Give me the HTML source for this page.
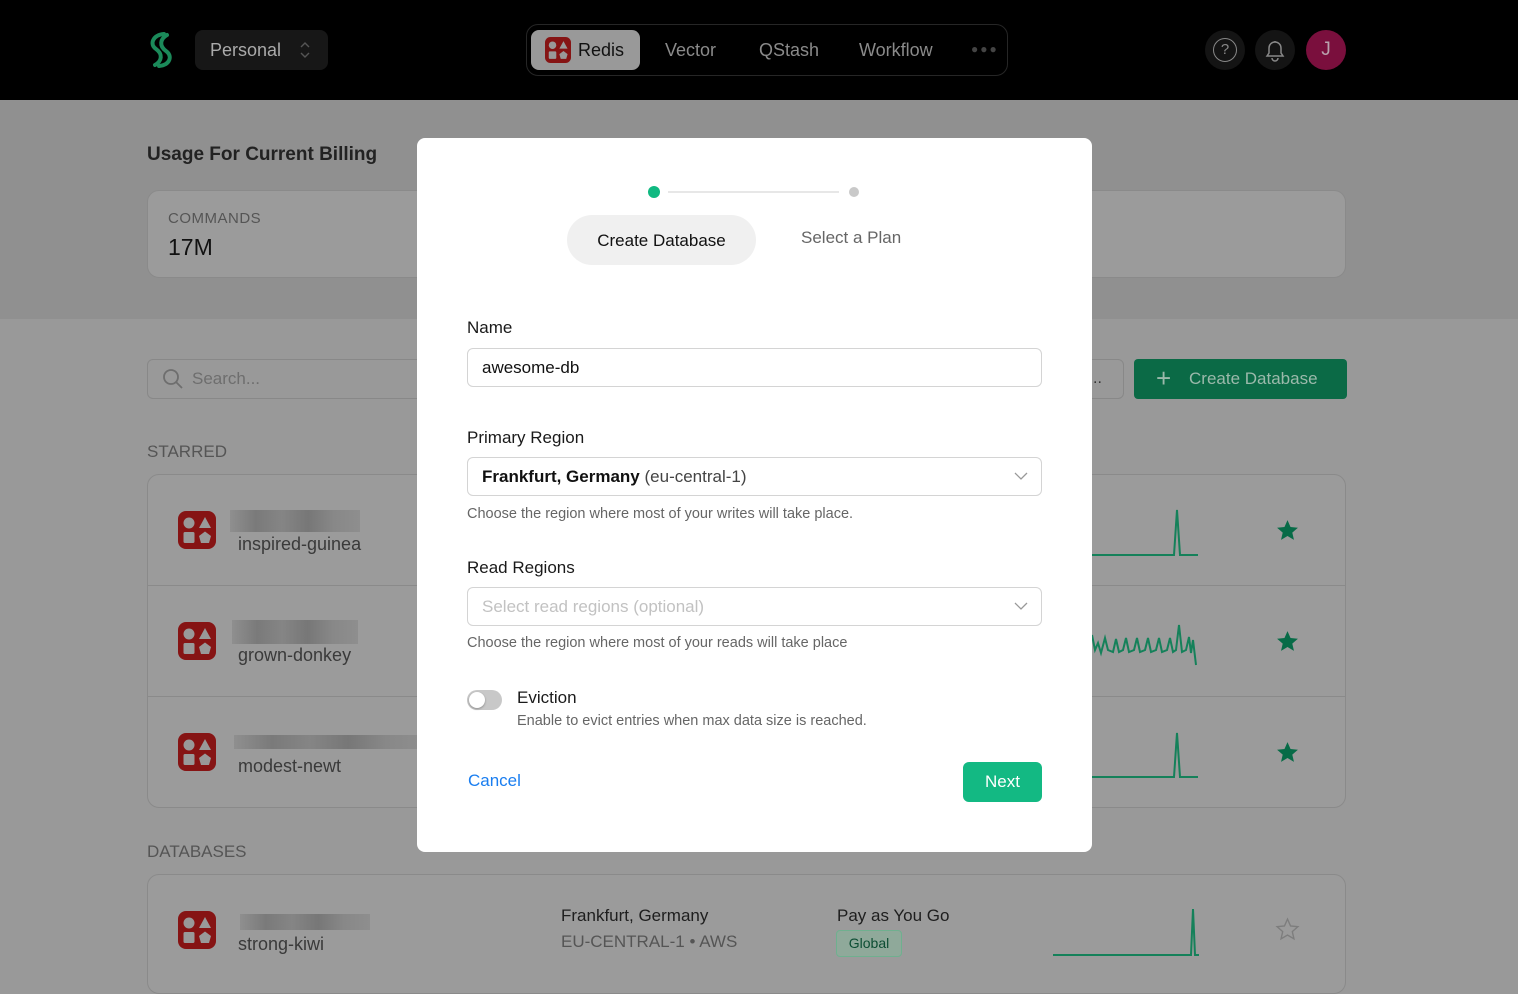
<!DOCTYPE html>
<html><head><meta charset="utf-8"><style>
*{box-sizing:border-box;margin:0;padding:0}
body{width:1518px;height:977px;overflow:hidden;background:#999;font-family:"Liberation Sans",sans-serif;position:relative;color:#222}
.abs{position:absolute}
.hdr{left:0;top:0;width:1518px;height:100px;background:#000}
.band{left:0;top:100px;width:1518px;height:219px;background:#909090}
.card{background:#9b9b9b;border:1px solid #8a8a8a;border-radius:12px}
.blur{height:14px;background:linear-gradient(90deg,#8f8f8f,#7a7a7a 20%,#858585 40%,#777 60%,#888 80%,#8e8e8e)}
.name{font-size:18px;color:#3a3a3a}
.modal{left:417px;top:138px;width:675px;height:714px;background:#fff;border-radius:8px}
.lbl{font-size:17px;color:#1a1a1a}
.inp{border:1px solid #d4d4d4;border-radius:6px;height:39px;width:575px;font-size:17px;padding:0 14px;line-height:37px}
.help{font-size:14.5px;color:#666}
</style></head><body>
<svg width="0" height="0" style="position:absolute"><defs>
<symbol id="ri" viewBox="0 0 38 38"><rect width="38" height="38" rx="8" fill="#861414"/><circle cx="11" cy="12" r="5.5" fill="#999"/><path d="M27 6 L33 17 H21 Z" fill="#999"/><rect x="5.5" y="21" width="11" height="11" rx="1.5" fill="#999"/><path d="M27 20.5 L33 25 L31 32 H23 L21 25 Z" fill="#999"/></symbol>
<symbol id="st" viewBox="0 0 24 24"><path d="M12 2 L14.9 8.6 L22 9.3 L16.6 14 L18.2 21 L12 17.3 L5.8 21 L7.4 14 L2 9.3 L9.1 8.6 Z"/></symbol>
</defs></svg>
<div class="abs hdr"></div>
<svg class="abs" style="left:145px;top:30px" width="32" height="40" viewBox="0 0 32 40"><path d="M19 4 C8 5 4 14 11 19 C18 24 17 31 10 35 M14 36 C25 35 28 26 21 21 C14 16 15 9 22 5" fill="none" stroke="#1b8a5a" stroke-width="4" stroke-linecap="round"/></svg>
<div class="abs" style="left:195px;top:30px;width:133px;height:40px;background:#171717;border-radius:8px;color:#aaa;font-size:18px;line-height:40px;padding-left:15px">Personal</div>
<svg class="abs" style="left:299px;top:40px" width="12" height="20"><path d="M2 7 L6 3 L10 7 M2 13 L6 17 L10 13" fill="none" stroke="#555" stroke-width="1.4"/></svg>
<div class="abs" style="left:526px;top:24px;width:482px;height:52px;border:1px solid #262626;border-radius:12px"></div>
<div class="abs" style="left:531px;top:30px;width:109px;height:40px;background:#999;border-radius:8px"></div>
<svg class="abs" style="left:545px;top:37px" width="26" height="26"><use href="#ri"/></svg>
<div class="abs" style="left:578px;top:30px;line-height:40px;font-size:18px;color:#111">Redis</div>
<div class="abs" style="left:665px;top:30px;line-height:40px;font-size:18px;color:#8a8a8a">Vector</div>
<div class="abs" style="left:759px;top:30px;line-height:40px;font-size:18px;color:#8a8a8a">QStash</div>
<div class="abs" style="left:859px;top:30px;line-height:40px;font-size:18px;color:#8a8a8a">Workflow</div>
<div class="abs" style="left:971px;top:30px;line-height:38px;font-size:12px;color:#444;letter-spacing:2px">●●●</div>
<div class="abs" style="left:1205px;top:30px;width:40px;height:40px;border-radius:50%;background:#141414;color:#888;text-align:center"><span style="display:inline-block;width:24px;height:24px;border:1.5px solid #888;border-radius:50%;line-height:21px;font-size:15px;margin-top:8px;vertical-align:top">?</span></div>
<div class="abs" style="left:1255px;top:30px;width:40px;height:40px;border-radius:50%;background:#141414"></div>
<svg class="abs" style="left:1263px;top:37px" width="24" height="26" viewBox="0 0 24 26"><path d="M4 19 L6 16 V11 a6 6 0 0 1 12 0 V16 L20 19 Z M9 21 a3 3 0 0 0 6 0 M12 4 V5" fill="none" stroke="#888" stroke-width="1.5"/></svg>
<div class="abs" style="left:1306px;top:30px;width:40px;height:40px;border-radius:50%;background:#7a0f3d;color:#b9a2ad;font-size:19px;text-align:center;line-height:40px">J</div>

<div class="abs band"></div>
<div class="abs" style="left:147px;top:144px;font-size:19px;font-weight:bold;color:#222">Usage For Current Billing</div>
<div class="abs card" style="left:147px;top:190px;width:1199px;height:88px"></div>
<div class="abs" style="left:168px;top:210px;font-size:15px;color:#555;letter-spacing:.5px">COMMANDS</div>
<div class="abs" style="left:168px;top:234px;font-size:23px;color:#111">17M</div>

<div class="abs" style="left:147px;top:359px;width:290px;height:40px;border:1px solid #888;border-radius:6px;font-size:17px;color:#6e6e6e;line-height:38px;padding-left:44px">Search...</div>
<svg class="abs" style="left:162px;top:368px" width="22" height="22"><circle cx="9" cy="9" r="7" fill="none" stroke="#6e6e6e" stroke-width="1.8"/><path d="M14 14 L20 20" stroke="#6e6e6e" stroke-width="1.8"/></svg>
<div class="abs" style="left:1080px;top:359px;width:44px;height:40px;border:1px solid #888;border-radius:6px;color:#333;line-height:38px;padding-left:12px">..</div>
<div class="abs" style="left:1134px;top:359px;width:213px;height:40px;background:#0b6a46;border-radius:4px;color:#9bb9ab;font-size:17px;line-height:40px;padding-left:55px">Create Database</div>
<div class="abs" style="left:1156px;top:359px;line-height:38px;font-size:26px;color:#9bb9ab;font-weight:300">+</div>

<div class="abs" style="left:147px;top:442px;font-size:17px;color:#555">STARRED</div>
<div class="abs card" style="left:147px;top:474px;width:1199px;height:334px"></div>
<div class="abs" style="left:148px;top:585px;width:1197px;height:1px;background:#8a8a8a"></div>
<div class="abs" style="left:148px;top:696px;width:1197px;height:1px;background:#8a8a8a"></div>
<svg class="abs" style="left:178px;top:511px" width="38" height="38"><use href="#ri"/></svg>
<div class="abs blur" style="left:230px;top:510px;width:130px;height:22px"></div>
<div class="abs name" style="left:238px;top:534px">inspired-guinea</div>
<svg class="abs" style="left:178px;top:622px" width="38" height="38"><use href="#ri"/></svg>
<div class="abs blur" style="left:232px;top:620px;width:126px;height:24px"></div>
<div class="abs name" style="left:238px;top:645px">grown-donkey</div>
<svg class="abs" style="left:178px;top:733px" width="38" height="38"><use href="#ri"/></svg>
<div class="abs blur" style="left:234px;top:735px;width:190px;height:14px"></div>
<div class="abs name" style="left:238px;top:756px">modest-newt</div>
<svg class="abs" style="left:1092px;top:505px" width="110" height="280"><path d="M0 50 H82 L85 5 L88 50 H106" fill="none" stroke="#15815a" stroke-width="2"/><path d="M0 130 L3 145 L6 138 L9 148 L13 133 L16 145 L21 147 L24 134 L27 147 L31 145 L34 133 L37 147 L42 145 L45 133 L48 147 L53 145 L56 133 L59 147 L64 145 L67 133 L70 147 L75 145 L78 133 L81 147 L84 145 L87 120 L90 147 L94 145 L97 132 L99 148 L101 135 L104 160" fill="none" stroke="#15815a" stroke-width="2"/><path d="M0 272 H82 L85 228 L88 272 H106" fill="none" stroke="#15815a" stroke-width="2"/></svg>
<svg class="abs" style="left:1275px;top:518px;fill:#076b47" width="25" height="25"><use href="#st"/></svg>
<svg class="abs" style="left:1275px;top:629px;fill:#076b47" width="25" height="25"><use href="#st"/></svg>
<svg class="abs" style="left:1275px;top:740px;fill:#076b47" width="25" height="25"><use href="#st"/></svg>

<div class="abs" style="left:147px;top:842px;font-size:17px;color:#555">DATABASES</div>
<div class="abs card" style="left:147px;top:874px;width:1199px;height:120px"></div>
<svg class="abs" style="left:178px;top:911px" width="38" height="38"><use href="#ri"/></svg>
<div class="abs blur" style="left:240px;top:914px;width:130px;height:16px"></div>
<div class="abs name" style="left:238px;top:934px">strong-kiwi</div>
<div class="abs" style="left:561px;top:906px;font-size:17px;color:#1e1e1e">Frankfurt, Germany</div>
<div class="abs" style="left:561px;top:932px;font-size:17px;color:#555">EU-CENTRAL-1 • AWS</div>
<div class="abs" style="left:837px;top:906px;font-size:17px;color:#1e1e1e">Pay as You Go</div>
<div class="abs" style="left:836px;top:930px;width:66px;height:27px;border:1px solid #6fb08f;background:#8fa99a;border-radius:4px;font-size:14px;color:#0c4d33;text-align:center;line-height:25px">Global</div>
<svg class="abs" style="left:1053px;top:905px" width="150" height="55"><path d="M0 50 H138 L140 4 L142 50 H146" fill="none" stroke="#15815a" stroke-width="2"/></svg>
<svg class="abs" style="left:1275px;top:917px" width="25" height="25" viewBox="0 0 24 24"><path d="M12 2 L14.9 8.6 L22 9.3 L16.6 14 L18.2 21 L12 17.3 L5.8 21 L7.4 14 L2 9.3 L9.1 8.6 Z" fill="none" stroke="#7d7d7d" stroke-width="1.3"/></svg>

<div class="abs modal"></div>
<div class="abs" style="left:648px;top:186px;width:12px;height:12px;border-radius:50%;background:#10b981"></div>
<div class="abs" style="left:668px;top:191px;width:171px;height:2px;background:#e7e7e7"></div>
<div class="abs" style="left:849px;top:187px;width:10px;height:10px;border-radius:50%;background:#c9c9c9"></div>
<div class="abs" style="left:567px;top:215px;width:189px;height:50px;background:#f0f0f0;border-radius:25px;font-size:17px;color:#111;text-align:center;line-height:52px">Create Database</div>
<div class="abs" style="left:801px;top:228px;font-size:17px;color:#666">Select a Plan</div>
<div class="abs lbl" style="left:467px;top:318px">Name</div>
<div class="abs inp" style="left:467px;top:348px;color:#111">awesome-db</div>
<div class="abs lbl" style="left:467px;top:428px">Primary Region</div>
<div class="abs inp" style="left:467px;top:457px;color:#111"><b>Frankfurt, Germany</b> <span style="color:#444">(eu-central-1)</span></div>
<svg class="abs" style="left:1014px;top:471px" width="14" height="10"><path d="M1 2 L7 8 L13 2" fill="none" stroke="#999" stroke-width="1.3"/></svg>
<div class="abs help" style="left:467px;top:506px">Choose the region where most of your writes will take place.</div>
<div class="abs lbl" style="left:467px;top:558px">Read Regions</div>
<div class="abs inp" style="left:467px;top:587px;color:#c2c2c2">Select read regions (optional)</div>
<svg class="abs" style="left:1014px;top:601px" width="14" height="10"><path d="M1 2 L7 8 L13 2" fill="none" stroke="#999" stroke-width="1.3"/></svg>
<div class="abs help" style="left:467px;top:635px">Choose the region where most of your reads will take place</div>
<div class="abs" style="left:467px;top:690px;width:35px;height:20px;border-radius:10px;background:#c8c8c8"></div>
<div class="abs" style="left:469px;top:692px;width:16px;height:16px;border-radius:50%;background:#fff;box-shadow:0 1px 2px rgba(0,0,0,.3)"></div>
<div class="abs lbl" style="left:517px;top:688px">Eviction</div>
<div class="abs help" style="left:517px;top:713px">Enable to evict entries when max data size is reached.</div>
<div class="abs" style="left:468px;top:771px;font-size:17px;color:#1a7ef0">Cancel</div>
<div class="abs" style="left:963px;top:762px;width:79px;height:40px;background:#13b983;border-radius:6px;color:#fff;font-size:17px;text-align:center;line-height:40px">Next</div>
</body></html>
